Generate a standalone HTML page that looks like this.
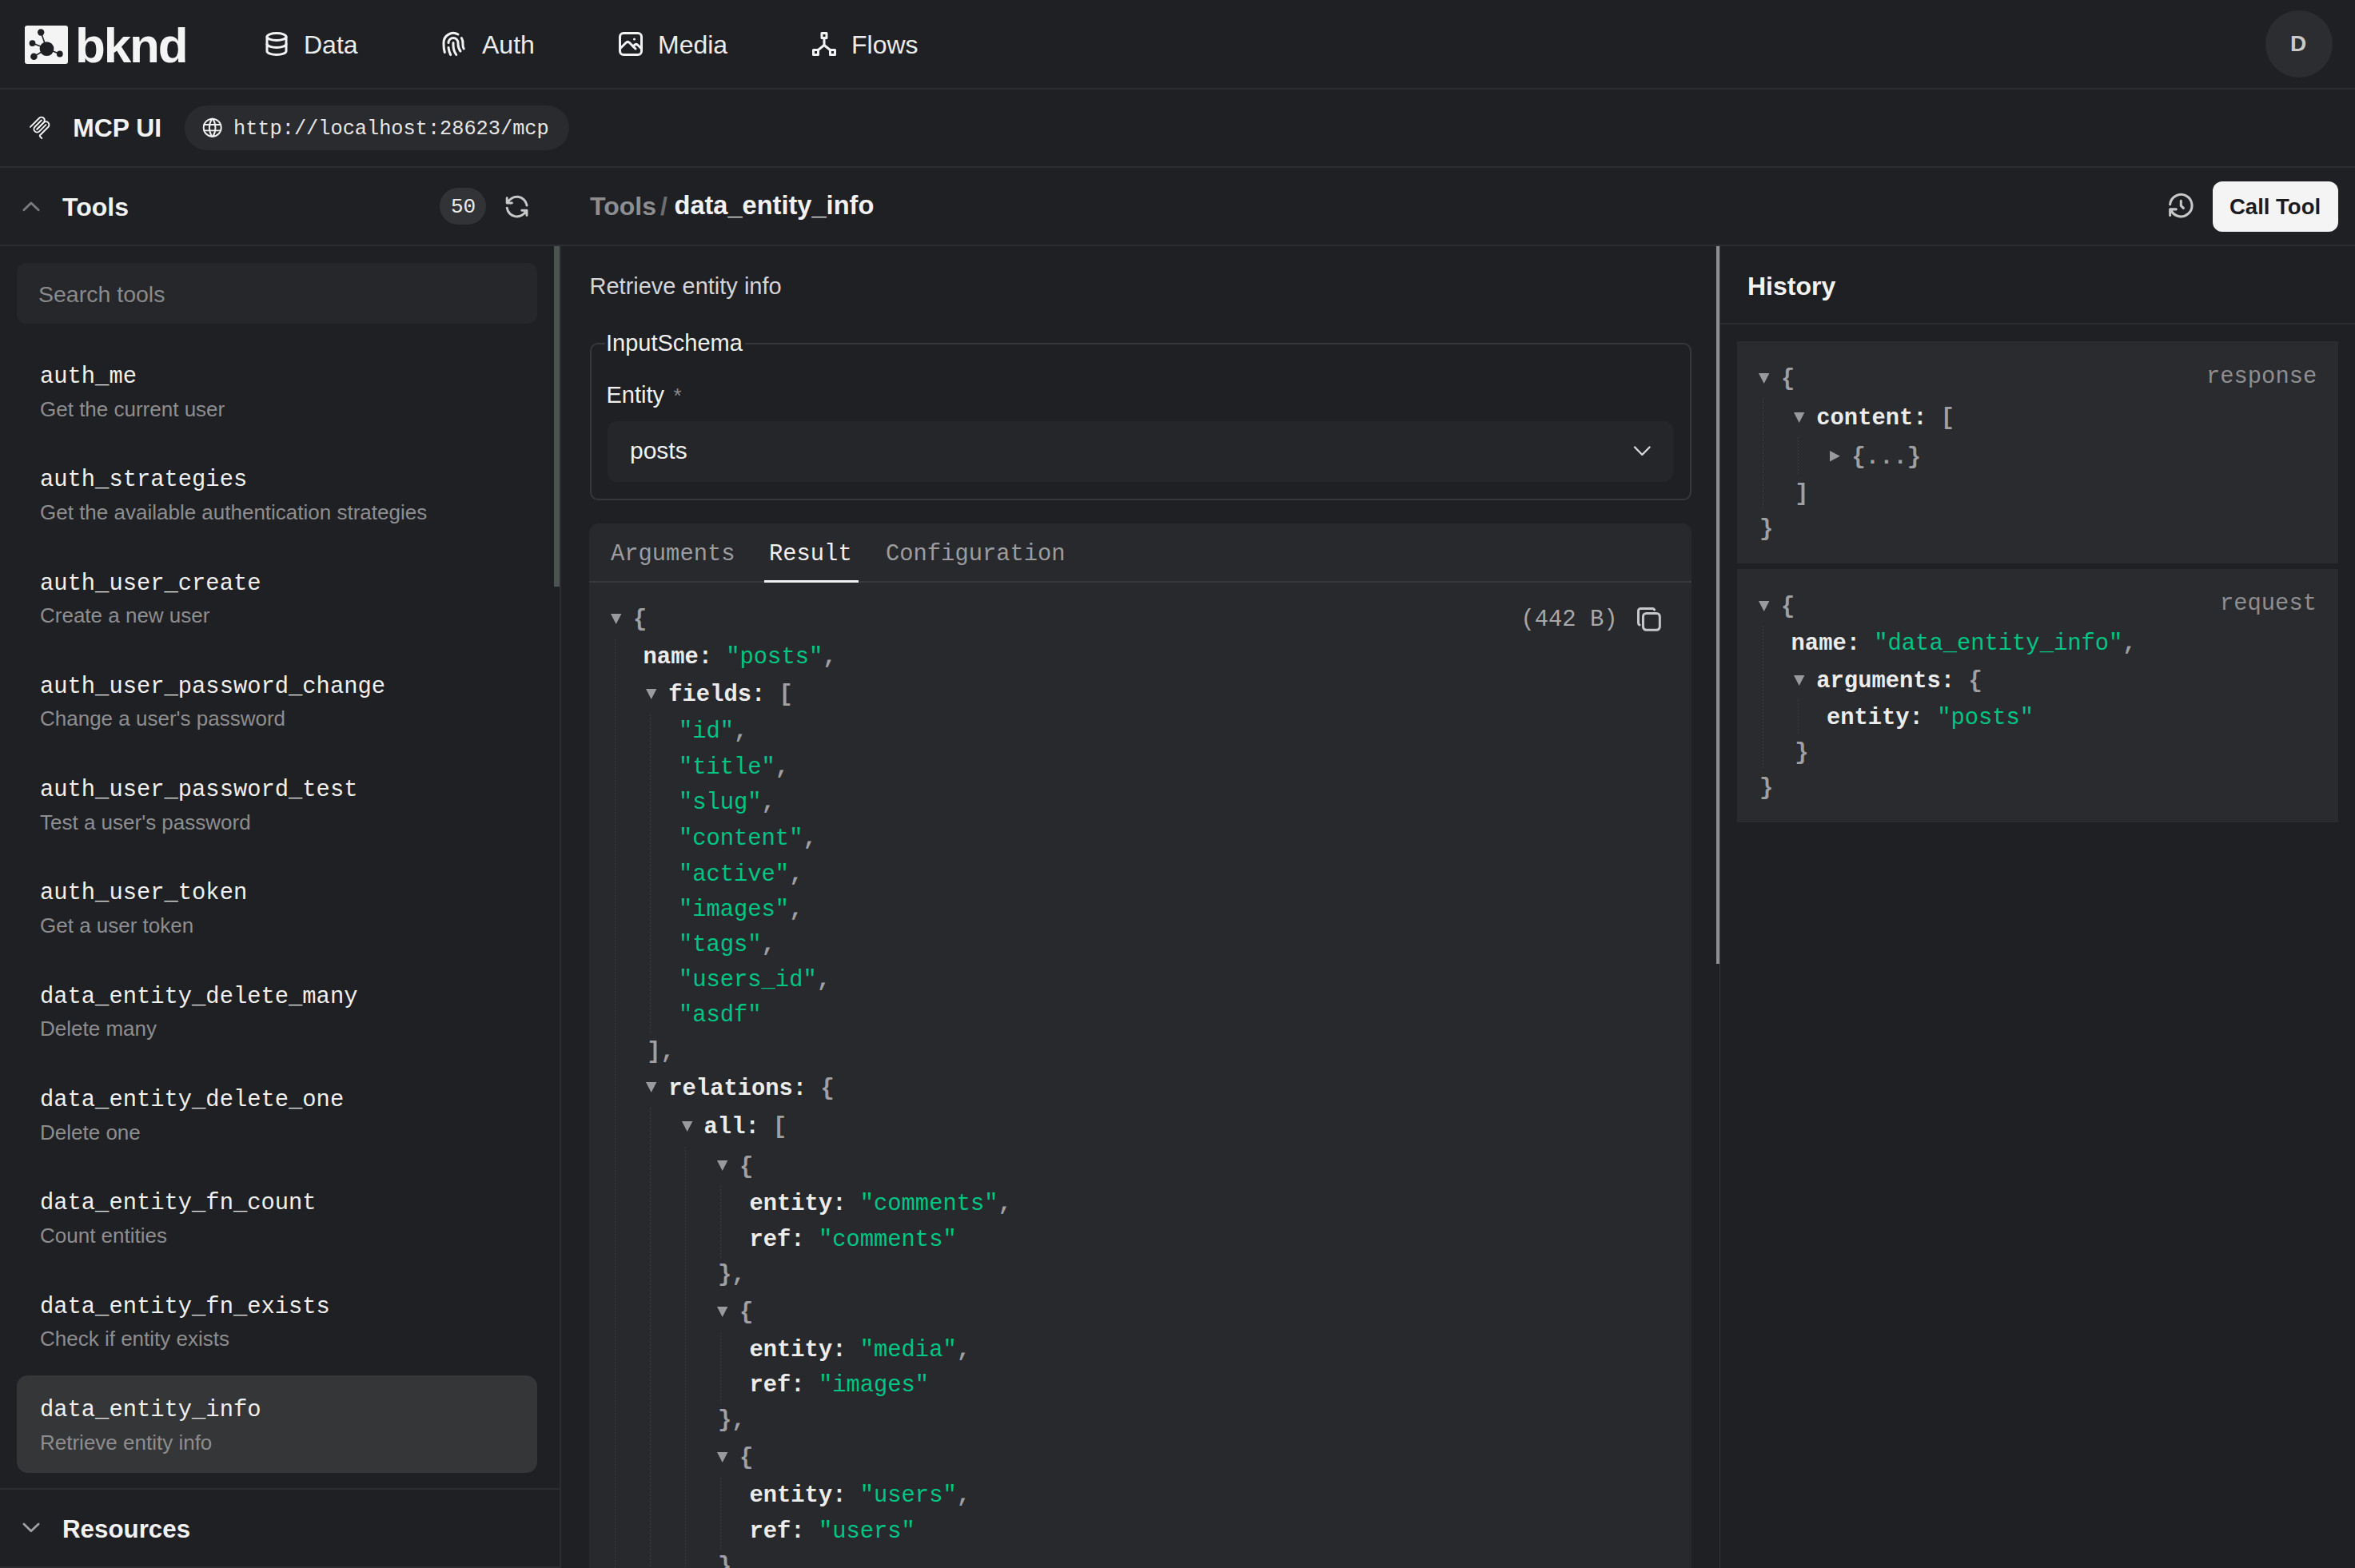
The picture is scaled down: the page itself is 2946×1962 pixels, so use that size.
<!DOCTYPE html>
<html><head><meta charset="utf-8"><style>
html,body{margin:0;padding:0;}
body{width:2946px;height:1962px;background:#1f2024;position:relative;overflow:hidden;font-family:'Liberation Sans', sans-serif;}
.t{position:absolute;white-space:pre;}
.r{position:absolute;box-sizing:border-box;}
svg{position:absolute;overflow:visible;}
</style></head><body>
<div class="r" style="left:0px;top:110px;width:2946px;height:2px;background:#2c2d31;border-radius:0px;"></div>
<div class="r" style="left:0px;top:208px;width:2946px;height:2px;background:#2c2d31;border-radius:0px;"></div>
<div class="r" style="left:0px;top:306px;width:2946px;height:2px;background:#2c2d31;border-radius:0px;"></div>
<svg style="left:31px;top:32px" width="54" height="48" viewBox="0 0 54 48">
<rect x="0" y="0" width="54" height="48" rx="3" fill="#f4f4f4"/>
<g stroke="#1f2024" stroke-width="1.6">
<line x1="27.5" y1="29.1" x2="20.2" y2="8.5"/>
<line x1="27.5" y1="29.1" x2="9.5" y2="22.1"/>
<line x1="27.5" y1="29.1" x2="11.4" y2="38.7"/>
<line x1="27.5" y1="29.1" x2="43.8" y2="35.5"/>
</g>
<g fill="#1f2024">
<circle cx="27.5" cy="29.1" r="8.9"/>
<circle cx="20.2" cy="8.5" r="4.2"/>
<circle cx="9.5" cy="22.1" r="3.9"/>
<circle cx="11.4" cy="38.7" r="4.3"/>
<circle cx="43.8" cy="35.5" r="3.9"/>
</g></svg>
<div class="t" style="left:94.0px;top:25.5px;font-family:'Liberation Sans', sans-serif;font-size:62px;line-height:62px;font-weight:700;color:#f4f4f4;letter-spacing:-2.2px;">bknd</div>
<svg style="left:327.5px;top:37px" width="36" height="36" viewBox="0 0 24 24" fill="none" stroke="#f2f2f2" stroke-width="2" stroke-linecap="round" stroke-linejoin="round"><ellipse cx="12" cy="6" rx="8" ry="3"/><path d="M4 6v6a8 3 0 0 0 16 0v-6"/><path d="M4 12v6a8 3 0 0 0 16 0v-6"/></svg>
<div class="t" style="left:380.0px;top:40.4px;font-family:'Liberation Sans', sans-serif;font-size:32px;line-height:32px;font-weight:400;color:#ececec;">Data</div>
<svg style="left:548.5px;top:36.8px" width="36" height="36" viewBox="0 0 24 24" fill="none" stroke="#f2f2f2" stroke-width="2" stroke-linecap="round" stroke-linejoin="round"><path d="M18.9 7a8 8 0 0 1 1.1 5v1a6 6 0 0 0 .8 3"/><path d="M8 11a4 4 0 0 1 8 0v1a10 10 0 0 0 2 6"/><path d="M12 11v2a14 14 0 0 0 2.5 8"/><path d="M8 15a18 18 0 0 0 1.8 6"/><path d="M4.9 19a22 22 0 0 1 -.9 -7v-1a8 8 0 0 1 12 -6.95"/></svg>
<div class="t" style="left:603.0px;top:40.4px;font-family:'Liberation Sans', sans-serif;font-size:32px;line-height:32px;font-weight:400;color:#ececec;">Auth</div>
<svg style="left:771px;top:37px" width="36" height="36" viewBox="0 0 24 24" fill="none" stroke="#f2f2f2" stroke-width="2" stroke-linecap="round" stroke-linejoin="round"><path d="M15 8h.01"/><path d="M3 6a3 3 0 0 1 3 -3h12a3 3 0 0 1 3 3v12a3 3 0 0 1 -3 3h-12a3 3 0 0 1 -3 -3v-12z"/><path d="M3 16l5 -5c.928 -.893 2.072 -.893 3 0l5 5"/><path d="M14 14l1 -1c.928 -.893 2.072 -.893 3 0l3 3"/></svg>
<div class="t" style="left:823.0px;top:40.4px;font-family:'Liberation Sans', sans-serif;font-size:32px;line-height:32px;font-weight:400;color:#ececec;">Media</div>
<svg style="left:1012.7px;top:37px" width="36" height="36" viewBox="0 0 24 24" fill="none" stroke="#f2f2f2" stroke-width="2" stroke-linecap="round" stroke-linejoin="round"><path d="M10 3h4v4h-4z"/><path d="M3 17h4v4h-4z"/><path d="M17 17h4v4h-4z"/><path d="M7 17l5 -4l5 4"/><path d="M12 7l0 6"/></svg>
<div class="t" style="left:1065.0px;top:40.4px;font-family:'Liberation Sans', sans-serif;font-size:32px;line-height:32px;font-weight:400;color:#ececec;">Flows</div>
<div class="r" style="left:2834px;top:13px;width:84px;height:84px;background:#2c2d30;border-radius:42px;"></div>
<div class="t" style="left:2865.0px;top:41.3px;font-family:'Liberation Sans', sans-serif;font-size:28px;line-height:28px;font-weight:700;color:#c9c9c9;">D</div>
<svg style="left:34.73px;top:145.24px" width="29.5" height="29.5" viewBox="0 0 180 180" fill="none" stroke="#f2f2f2" stroke-width="12" stroke-linecap="round">
<path d="M18 84.8528L85.8822 16.9706C95.2548 7.59798 110.451 7.59798 119.823 16.9706C129.196 26.3431 129.196 41.5391 119.823 50.9117L68.5581 102.177"/>
<path d="M69.2652 101.47L119.823 50.9117C129.196 41.5391 144.392 41.5391 153.765 50.9117L154.118 51.2652C163.491 60.6378 163.491 75.8338 154.118 85.2063L92.7248 146.6C89.6006 149.724 89.6006 154.789 92.7248 157.913L105.331 170.52"/>
<path d="M102.853 33.9411L52.6482 84.1457C43.2756 93.5183 43.2756 108.714 52.6482 118.087C62.0208 127.459 77.2167 127.459 86.5893 118.087L136.794 67.8822"/>
</svg>
<div class="t" style="left:91.3px;top:145.1px;font-family:'Liberation Sans', sans-serif;font-size:31.8px;line-height:31.8px;font-weight:700;color:#f2f2f2;">MCP UI</div>
<div class="r" style="left:231px;top:132px;width:481px;height:56px;background:#2a2b2e;border-radius:28px;"></div>
<svg style="left:251.3px;top:145.3px" width="29.4" height="29.4" viewBox="0 0 24 24" fill="none" stroke="#f2f2f2" stroke-width="1.6" stroke-linecap="round" stroke-linejoin="round"><path d="M3 12a9 9 0 1 0 18 0a9 9 0 0 0 -18 0"/><path d="M3.6 9h16.8"/><path d="M3.6 15h16.8"/><path d="M11.5 3a17 17 0 0 0 0 18"/><path d="M12.5 3a17 17 0 0 1 0 18"/></svg>
<div class="t" style="left:292.0px;top:148.6px;font-family:'Liberation Mono', monospace;font-size:25.3px;line-height:25.3px;font-weight:400;color:#e6e6e6;">http://localhost:28623/mcp</div>
<div class="r" style="left:700px;top:306px;width:2px;height:1656px;background:#2c2d31;border-radius:0px;"></div>
<svg style="left:0;top:0" width="2946" height="1962"><polyline points="29.9,262.7 38.9,253.9 48.1,262.7" fill="none" stroke="#7a7b7d" stroke-width="2.8" stroke-linecap="round" stroke-linejoin="round"/></svg>
<div class="t" style="left:78.0px;top:242.9px;font-family:'Liberation Sans', sans-serif;font-size:32px;line-height:32px;font-weight:700;color:#f2f2f2;">Tools</div>
<div class="r" style="left:550px;top:235px;width:58px;height:46px;background:#323336;border-radius:23px;"></div>
<div class="t" style="left:564.0px;top:246.4px;font-family:'Liberation Mono', monospace;font-size:26px;line-height:26px;font-weight:400;color:#ececec;">50</div>
<svg style="left:628.4px;top:240.1px" width="37.2" height="37.2" viewBox="0 0 24 24" fill="none" stroke="#c8c8c8" stroke-width="1.9" stroke-linecap="round" stroke-linejoin="round"><path d="M20 11a8.1 8.1 0 0 0 -15.5 -2m-.5 -4v4h4"/><path d="M4 13a8.1 8.1 0 0 0 15.5 2m.5 4v-4h-4"/></svg>
<div class="r" style="left:693px;top:308px;width:7px;height:426px;background:#4c5451;border-radius:0px;"></div>
<div class="r" style="left:21px;top:329px;width:651px;height:76px;background:#26272a;border-radius:12px;"></div>
<div class="t" style="left:48.0px;top:353.9px;font-family:'Liberation Sans', sans-serif;font-size:28.5px;line-height:28.5px;font-weight:400;color:#8a8a8c;">Search tools</div>
<div class="t" style="left:50.0px;top:457.9px;font-family:'Liberation Mono', monospace;font-size:28.8px;line-height:28.8px;font-weight:400;color:#f0f0f0;">auth_me</div>
<div class="t" style="left:50.0px;top:498.5px;font-family:'Liberation Sans', sans-serif;font-size:26px;line-height:26px;font-weight:400;color:#8d8d8f;">Get the current user</div>
<div class="t" style="left:50.0px;top:587.2px;font-family:'Liberation Mono', monospace;font-size:28.8px;line-height:28.8px;font-weight:400;color:#f0f0f0;">auth_strategies</div>
<div class="t" style="left:50.0px;top:627.8px;font-family:'Liberation Sans', sans-serif;font-size:26px;line-height:26px;font-weight:400;color:#8d8d8f;">Get the available authentication strategies</div>
<div class="t" style="left:50.0px;top:716.5px;font-family:'Liberation Mono', monospace;font-size:28.8px;line-height:28.8px;font-weight:400;color:#f0f0f0;">auth_user_create</div>
<div class="t" style="left:50.0px;top:757.1px;font-family:'Liberation Sans', sans-serif;font-size:26px;line-height:26px;font-weight:400;color:#8d8d8f;">Create a new user</div>
<div class="t" style="left:50.0px;top:845.8px;font-family:'Liberation Mono', monospace;font-size:28.8px;line-height:28.8px;font-weight:400;color:#f0f0f0;">auth_user_password_change</div>
<div class="t" style="left:50.0px;top:886.4px;font-family:'Liberation Sans', sans-serif;font-size:26px;line-height:26px;font-weight:400;color:#8d8d8f;">Change a user's password</div>
<div class="t" style="left:50.0px;top:975.1px;font-family:'Liberation Mono', monospace;font-size:28.8px;line-height:28.8px;font-weight:400;color:#f0f0f0;">auth_user_password_test</div>
<div class="t" style="left:50.0px;top:1015.7px;font-family:'Liberation Sans', sans-serif;font-size:26px;line-height:26px;font-weight:400;color:#8d8d8f;">Test a user's password</div>
<div class="t" style="left:50.0px;top:1104.4px;font-family:'Liberation Mono', monospace;font-size:28.8px;line-height:28.8px;font-weight:400;color:#f0f0f0;">auth_user_token</div>
<div class="t" style="left:50.0px;top:1145.0px;font-family:'Liberation Sans', sans-serif;font-size:26px;line-height:26px;font-weight:400;color:#8d8d8f;">Get a user token</div>
<div class="t" style="left:50.0px;top:1233.7px;font-family:'Liberation Mono', monospace;font-size:28.8px;line-height:28.8px;font-weight:400;color:#f0f0f0;">data_entity_delete_many</div>
<div class="t" style="left:50.0px;top:1274.3px;font-family:'Liberation Sans', sans-serif;font-size:26px;line-height:26px;font-weight:400;color:#8d8d8f;">Delete many</div>
<div class="t" style="left:50.0px;top:1363.0px;font-family:'Liberation Mono', monospace;font-size:28.8px;line-height:28.8px;font-weight:400;color:#f0f0f0;">data_entity_delete_one</div>
<div class="t" style="left:50.0px;top:1403.6px;font-family:'Liberation Sans', sans-serif;font-size:26px;line-height:26px;font-weight:400;color:#8d8d8f;">Delete one</div>
<div class="t" style="left:50.0px;top:1492.3px;font-family:'Liberation Mono', monospace;font-size:28.8px;line-height:28.8px;font-weight:400;color:#f0f0f0;">data_entity_fn_count</div>
<div class="t" style="left:50.0px;top:1532.9px;font-family:'Liberation Sans', sans-serif;font-size:26px;line-height:26px;font-weight:400;color:#8d8d8f;">Count entities</div>
<div class="t" style="left:50.0px;top:1621.6px;font-family:'Liberation Mono', monospace;font-size:28.8px;line-height:28.8px;font-weight:400;color:#f0f0f0;">data_entity_fn_exists</div>
<div class="t" style="left:50.0px;top:1662.2px;font-family:'Liberation Sans', sans-serif;font-size:26px;line-height:26px;font-weight:400;color:#8d8d8f;">Check if entity exists</div>
<div class="r" style="left:21px;top:1721px;width:651px;height:122px;background:#353638;border-radius:14px;"></div>
<div class="t" style="left:50.0px;top:1750.9px;font-family:'Liberation Mono', monospace;font-size:28.8px;line-height:28.8px;font-weight:400;color:#f0f0f0;">data_entity_info</div>
<div class="t" style="left:50.0px;top:1791.5px;font-family:'Liberation Sans', sans-serif;font-size:26px;line-height:26px;font-weight:400;color:#8d8d8f;">Retrieve entity info</div>
<div class="r" style="left:0px;top:1862px;width:700px;height:2px;background:#2c2d31;border-radius:0px;"></div>
<div class="r" style="left:0px;top:1960px;width:700px;height:2px;background:#2c2d31;border-radius:0px;"></div>
<svg style="left:0;top:0" width="2946" height="1962"><polyline points="29.9,1907 38.9,1915.8 48.1,1907" fill="none" stroke="#a0a0a2" stroke-width="2.8" stroke-linecap="round" stroke-linejoin="round"/></svg>
<div class="t" style="left:78.0px;top:1897.5px;font-family:'Liberation Sans', sans-serif;font-size:31.3px;line-height:31.3px;font-weight:700;color:#f2f2f2;">Resources</div>
<div class="t" style="left:738.0px;top:241.9px;font-family:'Liberation Sans', sans-serif;font-size:32px;line-height:32px;font-weight:700;color:#8e8e91;">Tools</div>
<div class="t" style="left:826.0px;top:241.9px;font-family:'Liberation Sans', sans-serif;font-size:32px;line-height:32px;font-weight:700;color:#6e6e72;">/</div>
<div class="t" style="left:843.5px;top:241.4px;font-family:'Liberation Sans', sans-serif;font-size:32.6px;line-height:32.6px;font-weight:700;color:#f2f2f2;">data_entity_info</div>
<svg style="left:2710.4px;top:239.4px" width="36.6" height="36.6" viewBox="0 0 24 24" fill="none" stroke="#c8c8c8" stroke-width="2" stroke-linecap="round" stroke-linejoin="round"><path d="M12 8l0 4l2 2"/><path d="M3.05 11a9 9 0 1 1 .5 4m-.5 5v-5h5"/></svg>
<div class="r" style="left:2768px;top:227px;width:157px;height:63px;background:#f4f4f4;border-radius:12px;"></div>
<div class="t" style="left:2789.0px;top:244.7px;font-family:'Liberation Sans', sans-serif;font-size:27.5px;line-height:27.5px;font-weight:700;color:#1b1c1f;">Call Tool</div>
<div class="r" style="left:2151px;top:306px;width:1px;height:1656px;background:#343539;border-radius:0px;"></div>
<div class="r" style="left:2147px;top:308px;width:4px;height:898px;background:#8e8f91;border-radius:0px;"></div>
<div class="t" style="left:737.5px;top:343.5px;font-family:'Liberation Sans', sans-serif;font-size:29px;line-height:29px;font-weight:400;color:#d4d4d6;">Retrieve entity info</div>
<div class="r" style="left:738px;top:429px;width:1378px;height:197px;background:transparent;border-radius:10px;border:2px solid #36373b;"></div>
<div class="r" style="left:757px;top:420px;width:175px;height:14px;background:#1f2024;border-radius:0px;"></div>
<div class="t" style="left:758.0px;top:415.0px;font-family:'Liberation Sans', sans-serif;font-size:29px;line-height:29px;font-weight:400;color:#f0f0f0;">InputSchema</div>
<div class="t" style="left:758.5px;top:480.1px;font-family:'Liberation Sans', sans-serif;font-size:29px;line-height:29px;font-weight:400;color:#f0f0f0;">Entity</div>
<div class="t" style="left:842.6px;top:481.9px;font-family:'Liberation Sans', sans-serif;font-size:26px;line-height:26px;font-weight:400;color:#8a8a8c;">*</div>
<div class="r" style="left:760px;top:527px;width:1333px;height:76px;background:#252629;border-radius:12px;"></div>
<div class="t" style="left:788.0px;top:549.1px;font-family:'Liberation Sans', sans-serif;font-size:30px;line-height:30px;font-weight:400;color:#f0f0f0;">posts</div>
<svg style="left:0;top:0" width="2946" height="1962"><polyline points="2045,559.5 2054.3,569 2063.6,559.5" fill="none" stroke="#d8d8da" stroke-width="2.4" stroke-linecap="round" stroke-linejoin="round"/></svg>
<div class="r" style="left:737px;top:655px;width:1379px;height:1400px;background:#28292d;border-radius:12px;"></div>
<div class="r" style="left:737px;top:727px;width:1379px;height:2px;background:#38393d;border-radius:0px;"></div>
<div class="t" style="left:764.0px;top:680.4px;font-family:'Liberation Mono', monospace;font-size:28.8px;line-height:28.8px;font-weight:400;color:#9c9c9f;">Arguments</div>
<div class="t" style="left:962.0px;top:680.4px;font-family:'Liberation Mono', monospace;font-size:28.8px;line-height:28.8px;font-weight:400;color:#f0f0f0;">Result</div>
<div class="t" style="left:1108.0px;top:680.4px;font-family:'Liberation Mono', monospace;font-size:28.8px;line-height:28.8px;font-weight:400;color:#9c9c9f;">Configuration</div>
<div class="r" style="left:956px;top:726px;width:118px;height:3px;background:#f0f0f0;border-radius:0px;"></div>
<div class="t" style="left:1902.5px;top:761.9px;font-family:'Liberation Mono', monospace;font-size:28.8px;line-height:28.8px;font-weight:400;color:#a8a8ab;">(442 B)</div>
<svg style="left:2044.8px;top:757px" width="35.8" height="35.8" viewBox="0 0 24 24" fill="none" stroke="#c8c8cb" stroke-width="2" stroke-linecap="round" stroke-linejoin="round"><path d="M7 9.667a2.667 2.667 0 0 1 2.667 -2.667h8.666a2.667 2.667 0 0 1 2.667 2.667v8.666a2.667 2.667 0 0 1 -2.667 2.667h-8.666a2.667 2.667 0 0 1 -2.667 -2.667z"/><path d="M4.012 16.737a2.005 2.005 0 0 1 -1.012 -1.737v-10c0 -1.1 .9 -2 2 -2h10c.75 0 1.158 .385 1.5 1"/></svg>
<svg style="left:764.0px;top:768.1px" width="14" height="14" viewBox="0 0 14 14"><polygon points="0,0 13.4,0 6.7,13" fill="#9a9a9e"/></svg>
<div class="t" style="left:792.0px;top:762.4px;font-family:'Liberation Mono', monospace;font-size:28.8px;line-height:28.8px;font-weight:400;color:#a0a0a4;"><span style="color:#a0a0a4;font-weight:700;">{</span></div>
<div class="t" style="left:804.6px;top:808.6px;font-family:'Liberation Mono', monospace;font-size:28.8px;line-height:28.8px;font-weight:400;color:#a0a0a4;"><span style="color:#ececec;font-weight:700;">name:</span> <span style="color:#00c583;">"posts"</span><span style="color:#a0a0a4;font-weight:700;">,</span></div>
<svg style="left:808.3px;top:862.1px" width="14" height="14" viewBox="0 0 14 14"><polygon points="0,0 13.4,0 6.7,13" fill="#9a9a9e"/></svg>
<div class="t" style="left:836.3px;top:856.4px;font-family:'Liberation Mono', monospace;font-size:28.8px;line-height:28.8px;font-weight:400;color:#a0a0a4;"><span style="color:#ececec;font-weight:700;">fields:</span> <span style="color:#a0a0a4;font-weight:700;">[</span></div>
<div class="t" style="left:848.9px;top:902.4px;font-family:'Liberation Mono', monospace;font-size:28.8px;line-height:28.8px;font-weight:400;color:#a0a0a4;"><span style="color:#00c583;">"id"</span><span style="color:#a0a0a4;font-weight:700;">,</span></div>
<div class="t" style="left:848.9px;top:946.9px;font-family:'Liberation Mono', monospace;font-size:28.8px;line-height:28.8px;font-weight:400;color:#a0a0a4;"><span style="color:#00c583;">"title"</span><span style="color:#a0a0a4;font-weight:700;">,</span></div>
<div class="t" style="left:848.9px;top:991.3px;font-family:'Liberation Mono', monospace;font-size:28.8px;line-height:28.8px;font-weight:400;color:#a0a0a4;"><span style="color:#00c583;">"slug"</span><span style="color:#a0a0a4;font-weight:700;">,</span></div>
<div class="t" style="left:848.9px;top:1036.4px;font-family:'Liberation Mono', monospace;font-size:28.8px;line-height:28.8px;font-weight:400;color:#a0a0a4;"><span style="color:#00c583;">"content"</span><span style="color:#a0a0a4;font-weight:700;">,</span></div>
<div class="t" style="left:848.9px;top:1080.7px;font-family:'Liberation Mono', monospace;font-size:28.8px;line-height:28.8px;font-weight:400;color:#a0a0a4;"><span style="color:#00c583;">"active"</span><span style="color:#a0a0a4;font-weight:700;">,</span></div>
<div class="t" style="left:848.9px;top:1124.9px;font-family:'Liberation Mono', monospace;font-size:28.8px;line-height:28.8px;font-weight:400;color:#a0a0a4;"><span style="color:#00c583;">"images"</span><span style="color:#a0a0a4;font-weight:700;">,</span></div>
<div class="t" style="left:848.9px;top:1169.2px;font-family:'Liberation Mono', monospace;font-size:28.8px;line-height:28.8px;font-weight:400;color:#a0a0a4;"><span style="color:#00c583;">"tags"</span><span style="color:#a0a0a4;font-weight:700;">,</span></div>
<div class="t" style="left:848.9px;top:1212.7px;font-family:'Liberation Mono', monospace;font-size:28.8px;line-height:28.8px;font-weight:400;color:#a0a0a4;"><span style="color:#00c583;">"users_id"</span><span style="color:#a0a0a4;font-weight:700;">,</span></div>
<div class="t" style="left:848.9px;top:1257.4px;font-family:'Liberation Mono', monospace;font-size:28.8px;line-height:28.8px;font-weight:400;color:#a0a0a4;"><span style="color:#00c583;">"asdf"</span></div>
<div class="t" style="left:809.3px;top:1302.9px;font-family:'Liberation Mono', monospace;font-size:28.8px;line-height:28.8px;font-weight:400;color:#a0a0a4;"><span style="color:#a0a0a4;font-weight:700;">],</span></div>
<svg style="left:808.3px;top:1354.3px" width="14" height="14" viewBox="0 0 14 14"><polygon points="0,0 13.4,0 6.7,13" fill="#9a9a9e"/></svg>
<div class="t" style="left:836.3px;top:1348.6px;font-family:'Liberation Mono', monospace;font-size:28.8px;line-height:28.8px;font-weight:400;color:#a0a0a4;"><span style="color:#ececec;font-weight:700;">relations:</span> <span style="color:#a0a0a4;font-weight:700;">{</span></div>
<svg style="left:852.6px;top:1403.0px" width="14" height="14" viewBox="0 0 14 14"><polygon points="0,0 13.4,0 6.7,13" fill="#9a9a9e"/></svg>
<div class="t" style="left:880.6px;top:1397.3px;font-family:'Liberation Mono', monospace;font-size:28.8px;line-height:28.8px;font-weight:400;color:#a0a0a4;"><span style="color:#ececec;font-weight:700;">all:</span> <span style="color:#a0a0a4;font-weight:700;">[</span></div>
<svg style="left:896.9px;top:1452.3px" width="14" height="14" viewBox="0 0 14 14"><polygon points="0,0 13.4,0 6.7,13" fill="#9a9a9e"/></svg>
<div class="t" style="left:924.9px;top:1446.6px;font-family:'Liberation Mono', monospace;font-size:28.8px;line-height:28.8px;font-weight:400;color:#a0a0a4;"><span style="color:#a0a0a4;font-weight:700;">{</span></div>
<div class="t" style="left:937.5px;top:1492.9px;font-family:'Liberation Mono', monospace;font-size:28.8px;line-height:28.8px;font-weight:400;color:#a0a0a4;"><span style="color:#ececec;font-weight:700;">entity:</span> <span style="color:#00c583;">"comments"</span><span style="color:#a0a0a4;font-weight:700;">,</span></div>
<div class="t" style="left:937.5px;top:1537.5px;font-family:'Liberation Mono', monospace;font-size:28.8px;line-height:28.8px;font-weight:400;color:#a0a0a4;"><span style="color:#ececec;font-weight:700;">ref:</span> <span style="color:#00c583;">"comments"</span></div>
<div class="t" style="left:897.9px;top:1581.9px;font-family:'Liberation Mono', monospace;font-size:28.8px;line-height:28.8px;font-weight:400;color:#a0a0a4;"><span style="color:#a0a0a4;font-weight:700;">},</span></div>
<svg style="left:896.9px;top:1634.6px" width="14" height="14" viewBox="0 0 14 14"><polygon points="0,0 13.4,0 6.7,13" fill="#9a9a9e"/></svg>
<div class="t" style="left:924.9px;top:1628.9px;font-family:'Liberation Mono', monospace;font-size:28.8px;line-height:28.8px;font-weight:400;color:#a0a0a4;"><span style="color:#a0a0a4;font-weight:700;">{</span></div>
<div class="t" style="left:937.5px;top:1675.9px;font-family:'Liberation Mono', monospace;font-size:28.8px;line-height:28.8px;font-weight:400;color:#a0a0a4;"><span style="color:#ececec;font-weight:700;">entity:</span> <span style="color:#00c583;">"media"</span><span style="color:#a0a0a4;font-weight:700;">,</span></div>
<div class="t" style="left:937.5px;top:1720.3px;font-family:'Liberation Mono', monospace;font-size:28.8px;line-height:28.8px;font-weight:400;color:#a0a0a4;"><span style="color:#ececec;font-weight:700;">ref:</span> <span style="color:#00c583;">"images"</span></div>
<div class="t" style="left:897.9px;top:1764.2px;font-family:'Liberation Mono', monospace;font-size:28.8px;line-height:28.8px;font-weight:400;color:#a0a0a4;"><span style="color:#a0a0a4;font-weight:700;">},</span></div>
<svg style="left:896.9px;top:1817.1px" width="14" height="14" viewBox="0 0 14 14"><polygon points="0,0 13.4,0 6.7,13" fill="#9a9a9e"/></svg>
<div class="t" style="left:924.9px;top:1811.4px;font-family:'Liberation Mono', monospace;font-size:28.8px;line-height:28.8px;font-weight:400;color:#a0a0a4;"><span style="color:#a0a0a4;font-weight:700;">{</span></div>
<div class="t" style="left:937.5px;top:1858.3px;font-family:'Liberation Mono', monospace;font-size:28.8px;line-height:28.8px;font-weight:400;color:#a0a0a4;"><span style="color:#ececec;font-weight:700;">entity:</span> <span style="color:#00c583;">"users"</span><span style="color:#a0a0a4;font-weight:700;">,</span></div>
<div class="t" style="left:937.5px;top:1902.6px;font-family:'Liberation Mono', monospace;font-size:28.8px;line-height:28.8px;font-weight:400;color:#a0a0a4;"><span style="color:#ececec;font-weight:700;">ref:</span> <span style="color:#00c583;">"users"</span></div>
<div class="t" style="left:897.9px;top:1947.1px;font-family:'Liberation Mono', monospace;font-size:28.8px;line-height:28.8px;font-weight:400;color:#a0a0a4;"><span style="color:#a0a0a4;font-weight:700;">}</span></div>
<div class="r" style="left:769.0px;top:800.0px;width:1px;height:1162.0px;background:repeating-linear-gradient(#3a3b3f 0 2px, transparent 2px 4px);"></div>
<div class="r" style="left:813.0px;top:894.0px;width:1px;height:400.0px;background:repeating-linear-gradient(#3a3b3f 0 2px, transparent 2px 4px);"></div>
<div class="r" style="left:813.0px;top:1386.0px;width:1px;height:576.0px;background:repeating-linear-gradient(#3a3b3f 0 2px, transparent 2px 4px);"></div>
<div class="r" style="left:857.0px;top:1435.0px;width:1px;height:527.0px;background:repeating-linear-gradient(#3a3b3f 0 2px, transparent 2px 4px);"></div>
<div class="r" style="left:901.0px;top:1484.0px;width:1px;height:91.0px;background:repeating-linear-gradient(#3a3b3f 0 2px, transparent 2px 4px);"></div>
<div class="r" style="left:901.0px;top:1667.0px;width:1px;height:90.0px;background:repeating-linear-gradient(#3a3b3f 0 2px, transparent 2px 4px);"></div>
<div class="r" style="left:901.0px;top:1849.0px;width:1px;height:91.0px;background:repeating-linear-gradient(#3a3b3f 0 2px, transparent 2px 4px);"></div>
<div class="t" style="left:2186.0px;top:342.2px;font-family:'Liberation Sans', sans-serif;font-size:32px;line-height:32px;font-weight:700;color:#f2f2f2;">History</div>
<div class="r" style="left:2152px;top:404px;width:794px;height:2px;background:#2c2d31;border-radius:0px;"></div>
<div class="r" style="left:2173px;top:427px;width:752px;height:278px;background:#2a2b2e;border-radius:0px;"></div>
<div class="r" style="left:2173px;top:712px;width:752px;height:317px;background:#2a2b2e;border-radius:0px;"></div>
<div class="t" style="left:2760.0px;top:457.9px;font-family:'Liberation Mono', monospace;font-size:28.8px;line-height:28.8px;font-weight:400;color:#8e8e91;">response</div>
<div class="t" style="left:2777.0px;top:741.9px;font-family:'Liberation Mono', monospace;font-size:28.8px;line-height:28.8px;font-weight:400;color:#8e8e91;">request</div>
<svg style="left:2200.0px;top:466.5px" width="14" height="14" viewBox="0 0 14 14"><polygon points="0,0 13.4,0 6.7,13" fill="#9a9a9e"/></svg>
<div class="t" style="left:2228.0px;top:460.8px;font-family:'Liberation Mono', monospace;font-size:28.8px;line-height:28.8px;font-weight:400;color:#a0a0a4;"><span style="color:#a0a0a4;font-weight:700;">{</span></div>
<svg style="left:2244.3px;top:515.6px" width="14" height="14" viewBox="0 0 14 14"><polygon points="0,0 13.4,0 6.7,13" fill="#9a9a9e"/></svg>
<div class="t" style="left:2272.3px;top:509.9px;font-family:'Liberation Mono', monospace;font-size:28.8px;line-height:28.8px;font-weight:400;color:#a0a0a4;"><span style="color:#ececec;font-weight:700;">content:</span> <span style="color:#a0a0a4;font-weight:700;">[</span></div>
<svg style="left:2288.6px;top:564.2px" width="14" height="14" viewBox="0 0 14 14"><polygon points="0,0 12.8,6.8 0,13.6" fill="#9a9a9e"/></svg>
<div class="t" style="left:2316.6px;top:558.6px;font-family:'Liberation Mono', monospace;font-size:28.8px;line-height:28.8px;font-weight:400;color:#a0a0a4;"><span style="color:#a0a0a4;font-weight:700;">{...}</span></div>
<div class="t" style="left:2245.3px;top:604.7px;font-family:'Liberation Mono', monospace;font-size:28.8px;line-height:28.8px;font-weight:400;color:#a0a0a4;"><span style="color:#a0a0a4;font-weight:700;">]</span></div>
<div class="t" style="left:2201.0px;top:648.5px;font-family:'Liberation Mono', monospace;font-size:28.8px;line-height:28.8px;font-weight:400;color:#a0a0a4;"><span style="color:#a0a0a4;font-weight:700;">}</span></div>
<div class="r" style="left:2205.0px;top:498.0px;width:1px;height:140.0px;background:repeating-linear-gradient(#3a3b3f 0 2px, transparent 2px 4px);"></div>
<div class="r" style="left:2249.0px;top:547.0px;width:1px;height:47.0px;background:repeating-linear-gradient(#3a3b3f 0 2px, transparent 2px 4px);"></div>
<svg style="left:2200.0px;top:751.6px" width="14" height="14" viewBox="0 0 14 14"><polygon points="0,0 13.4,0 6.7,13" fill="#9a9a9e"/></svg>
<div class="t" style="left:2228.0px;top:745.9px;font-family:'Liberation Mono', monospace;font-size:28.8px;line-height:28.8px;font-weight:400;color:#a0a0a4;"><span style="color:#a0a0a4;font-weight:700;">{</span></div>
<div class="t" style="left:2240.6px;top:791.7px;font-family:'Liberation Mono', monospace;font-size:28.8px;line-height:28.8px;font-weight:400;color:#a0a0a4;"><span style="color:#ececec;font-weight:700;">name:</span> <span style="color:#00c583;">"data_entity_info"</span><span style="color:#a0a0a4;font-weight:700;">,</span></div>
<svg style="left:2244.3px;top:844.6px" width="14" height="14" viewBox="0 0 14 14"><polygon points="0,0 13.4,0 6.7,13" fill="#9a9a9e"/></svg>
<div class="t" style="left:2272.3px;top:838.9px;font-family:'Liberation Mono', monospace;font-size:28.8px;line-height:28.8px;font-weight:400;color:#a0a0a4;"><span style="color:#ececec;font-weight:700;">arguments:</span> <span style="color:#a0a0a4;font-weight:700;">{</span></div>
<div class="t" style="left:2284.9px;top:884.5px;font-family:'Liberation Mono', monospace;font-size:28.8px;line-height:28.8px;font-weight:400;color:#a0a0a4;"><span style="color:#ececec;font-weight:700;">entity:</span> <span style="color:#00c583;">"posts"</span></div>
<div class="t" style="left:2245.3px;top:929.4px;font-family:'Liberation Mono', monospace;font-size:28.8px;line-height:28.8px;font-weight:400;color:#a0a0a4;"><span style="color:#a0a0a4;font-weight:700;">}</span></div>
<div class="t" style="left:2201.0px;top:973.4px;font-family:'Liberation Mono', monospace;font-size:28.8px;line-height:28.8px;font-weight:400;color:#a0a0a4;"><span style="color:#a0a0a4;font-weight:700;">}</span></div>
<div class="r" style="left:2205.0px;top:783.0px;width:1px;height:180.0px;background:repeating-linear-gradient(#3a3b3f 0 2px, transparent 2px 4px);"></div>
<div class="r" style="left:2249.0px;top:876.0px;width:1px;height:44.0px;background:repeating-linear-gradient(#3a3b3f 0 2px, transparent 2px 4px);"></div>
</body></html>
